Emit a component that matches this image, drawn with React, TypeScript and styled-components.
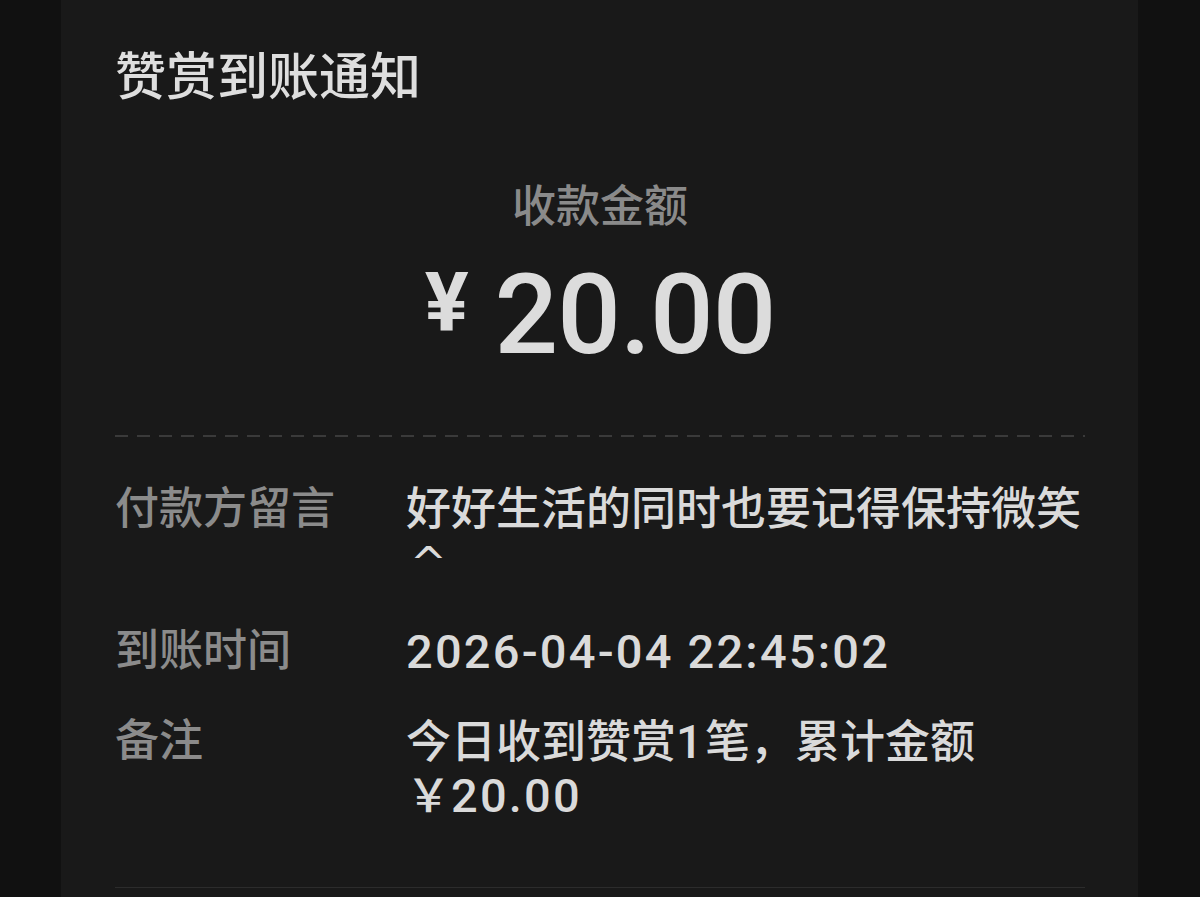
import React from "react";
import styled, { createGlobalStyle } from "styled-components";

const GlobalStyle = createGlobalStyle`
  html, body {
    margin: 0;
    padding: 0;
    background: #111111;
    overflow: hidden;
  }
  body {
    font-family: Roboto, "Noto Sans CJK SC", sans-serif;
  }
`;

const Page = styled.div`
  min-height: 100vh;
  padding: 0 62px 0 61px;
  box-sizing: border-box;
`;

const Card = styled.div`
  min-height: 100vh;
  background: #191919;
  padding: 43px 53px 0 54px;
  box-sizing: border-box;
`;

const Title = styled.div`
  font-size: 51px;
  line-height: 70px;
  font-weight: 500;
  color: #dedede;
`;

const AmountLabel = styled.div`
  margin-top: 64px;
  text-align: center;
  font-size: 44px;
  line-height: 60px;
  font-weight: 500;
  color: #8a8a8a;
`;

const Amount = styled.div`
  margin-top: 22px;
  display: flex;
  justify-content: center;
  align-items: flex-start;
  color: #dcdcdc;
`;

const Yen = styled.span`
  font-size: 82px;
  line-height: 82px;
  font-weight: 700;
  margin: 2px 26px 0 0;
`;

const Figure = styled.span`
  font-size: 112px;
  line-height: 112px;
  font-weight: 500;
  letter-spacing: -1px;
`;

const Divider = styled.div<{ $dashed?: boolean }>`
  height: ${(p) => (p.$dashed ? "2px" : "1px")};
  margin-top: ${(p) => (p.$dashed ? "64px" : "64px")};
  background: ${(p) =>
    p.$dashed
      ? "repeating-linear-gradient(90deg, #3a3a3a 0 13px, transparent 13px 22px)"
      : "#2c2c2c"};
`;

const Details = styled.div`
  margin-top: 46px;
  display: grid;
  grid-template-columns: 291px 1fr;
  row-gap: 36px;
`;

const Label = styled.div`
  font-size: 44px;
  line-height: 53px;
  font-weight: 500;
  color: #8b8b8b;
`;

const Value = styled.div`
  font-size: 45px;
  line-height: 53px;
  font-weight: 500;
  color: #dadada;
`;

const Num = styled.span`
  font-size: 47px;
  letter-spacing: 2.2px;
`;

const Caret = styled.span`
  font-family: "DejaVu Sans", sans-serif;
  font-size: 44px;
  margin-left: 4px;
`;

export default function App() {
  return (
    <>
      <GlobalStyle />
      <Page>
        <Card>
          <Title>赞赏到账通知</Title>
          <AmountLabel>收款金额</AmountLabel>
          <Amount>
            <Yen>¥</Yen>
            <Figure>20.00</Figure>
          </Amount>
          <Divider $dashed />
          <Details>
            <Label>付款方留言</Label>
            <Value>
              好好生活的同时也要记得保持微笑
              <br />
              <Caret>^</Caret>
            </Value>
            <Label>到账时间</Label>
            <Value>
              <Num>2026-04-04 22:45:02</Num>
            </Value>
            <Label>备注</Label>
            <Value>
              今日收到赞赏<Num>1</Num>笔，累计金额
              <br />￥<Num>20.00</Num>
            </Value>
          </Details>
          <Divider />
        </Card>
      </Page>
    </>
  );
}
